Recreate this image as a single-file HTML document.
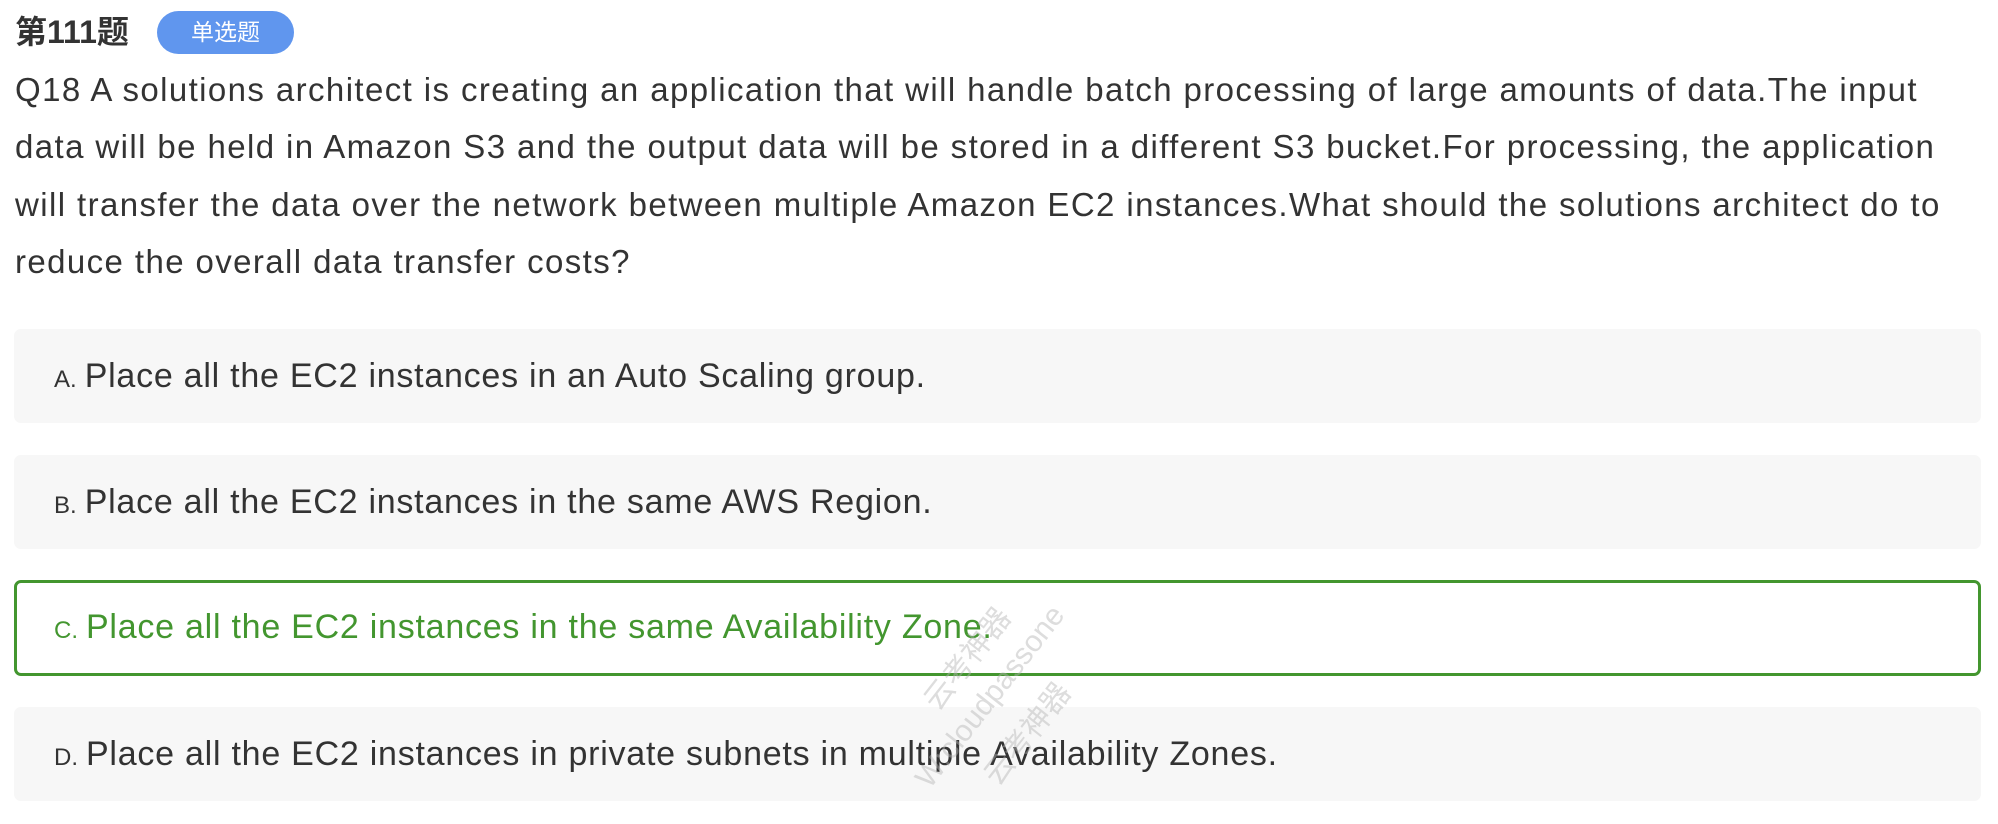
<!DOCTYPE html>
<html><head><meta charset="utf-8"><style>
body{margin:0;width:1998px;height:824px;background:#fff;font-family:"Liberation Sans","Noto Sans CJK SC",sans-serif;color:#333;position:relative;overflow:hidden}
.title{position:absolute;left:15px;top:11px;font-size:32px;font-weight:bold;color:#333;line-height:42px}
.badge{position:absolute;left:157px;top:11px;width:137px;height:43px;border-radius:22px;background:#6096ee;color:#fff;font-size:23px;line-height:43px;text-align:center}
.q{position:absolute;left:15px;top:61px;font-size:33px;letter-spacing:1.4px;line-height:57.3px;color:#333;white-space:nowrap}
.opt{position:absolute;left:14px;width:1967px;height:94px;background:#f7f7f7;border-radius:7px;box-sizing:border-box;font-size:34px;letter-spacing:0.75px;line-height:94px;padding-left:40px;white-space:nowrap}
.opt span{font-size:24px;margin-right:8px;letter-spacing:0}
.c{background:#fff;border:3px solid #43962f;color:#43962f;padding-left:37px;line-height:89px;height:96px}
.wm{position:absolute;color:rgba(180,180,180,.45);font-size:30px;transform:rotate(-52deg);white-space:nowrap}
</style></head><body>
<div class="title">第111题</div>
<div class="badge">单选题</div>
<div class="q">Q18 A solutions architect is creating an application that will handle batch processing of large amounts of data.The input<br>data will be held in Amazon S3 and the output data will be stored in a different S3 bucket.For processing, the application<br>will transfer the data over the network between multiple Amazon EC2 instances.What should the solutions architect do to<br>reduce the overall data transfer costs?</div>
<div class="opt" style="top:329px"><span>A.</span>Place all the EC2 instances in an Auto Scaling group.</div>
<div class="opt" style="top:455px"><span>B.</span>Place all the EC2 instances in the same AWS Region.</div>
<div class="opt c" style="top:580px"><span>C.</span>Place all the EC2 instances in the same Availability Zone.</div>
<div class="opt" style="top:707px"><span>D.</span>Place all the EC2 instances in private subnets in multiple Availability Zones.</div>
<div class="wm" style="left:905px;top:635px">云考神器</div>
<div class="wm" style="left:880px;top:680px">W:cloudpassone</div>
<div class="wm" style="left:965px;top:710px">云考神器</div>
</body></html>
